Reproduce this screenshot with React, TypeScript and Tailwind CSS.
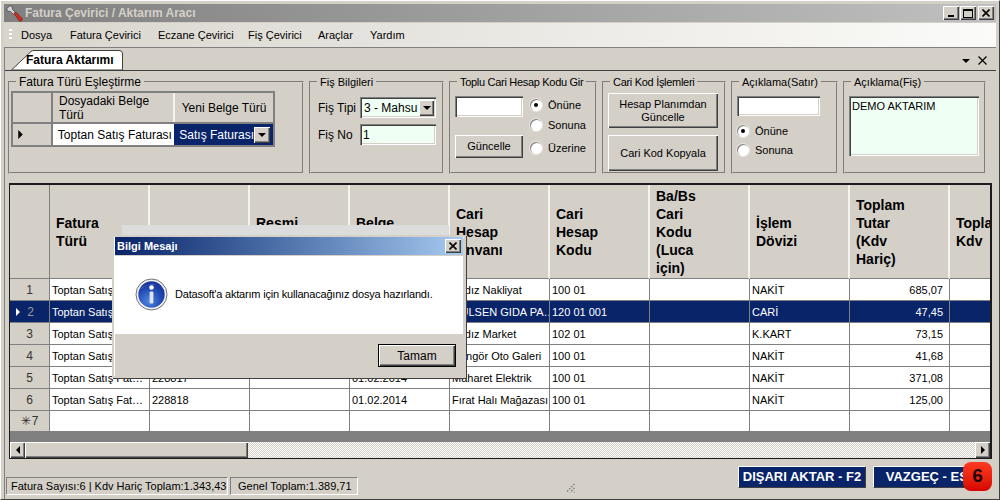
import type { ReactNode } from 'react';

const MENUS = ['Dosya', 'Fatura Çevirici', 'Eczane Çevirici', 'Fiş Çevirici', 'Araçlar', 'Yardım'];
const MENU_WIDTHS = ['w-[49px]', 'w-[88px]', 'w-[90px]', 'w-[70px]', 'w-[52px]', 'w-[40px]'];

const COLS = [
  'Fatura Türü',
  '',
  'Resmi Belge',
  'Belge Tarihi',
  'Cari Hesap Ünvanı',
  'Cari Hesap Kodu',
  'Ba/Bs Cari Kodu (Luca için)',
  'İşlem Dövizi',
  'Toplam Tutar (Kdv Hariç)',
  'Toplam Kdv',
];

const ROWS = [
  ['Toptan Satış Fat…', '228813', '', '01.02.2014', 'Yıldız Nakliyat', '100 01', '', 'NAKİT', '685,07', ''],
  ['Toptan Satış Fat…', '228814', '', '01.02.2014', 'GÜLSEN GIDA PA…', '120 01 001', '', 'CARİ', '47,45', ''],
  ['Toptan Satış Fat…', '228815', '', '01.02.2014', 'Yıldız Market', '102 01', '', 'K.KART', '73,15', ''],
  ['Toptan Satış Fat…', '228816', '', '01.02.2014', 'Dengör Oto Galeri', '100 01', '', 'NAKİT', '41,68', ''],
  ['Toptan Satış Fat…', '228817', '', '01.02.2014', 'Maharet Elektrik', '100 01', '', 'NAKİT', '371,08', ''],
  ['Toptan Satış Fat…', '228818', '', '01.02.2014', 'Fırat Halı Mağazası', '100 01', '', 'NAKİT', '125,00', ''],
  ['', '', '', '', '', '', '', '', '', ''],
];

const SUNKEN = 'shadow-[inset_1px_1px_0_#808080,inset_2px_2px_0_#404040,inset_-1px_-1px_0_#ffffff,inset_-2px_-2px_0_#d4d0c8]';
const RAISED = 'shadow-[inset_1px_1px_0_#ffffff,inset_-1px_-1px_0_#404040,inset_-2px_-2px_0_#808080]';

function Group({ title, className, legend = 'text-[11px]', children }: { title: string; className: string; legend?: string; children: ReactNode }) {
  return (
    <fieldset className={`h-[99px] shrink-0 border-2 border-[#d4d0c8] [border-style:groove] ${className}`}>
      <legend className={`ml-[6px] h-[14px] px-[3px] leading-[14px] whitespace-nowrap ${legend}`}>{title}</legend>
      {children}
    </fieldset>
  );
}

function Radio({ label, on, className = '' }: { label: string; on?: boolean; className?: string }) {
  return (
    <div className={`flex items-center gap-[6px] text-[11px] leading-[14px] ${className}`}>
      <span className="flex h-[12px] w-[12px] items-center justify-center rounded-full bg-white shadow-[inset_1px_1px_0_#808080,0_0_0_1px_#e8e6e0]">
        {on && <span className="h-[4px] w-[4px] rounded-full bg-black" />}
      </span>
      {label}
    </div>
  );
}

function Arrow({ dir = 'down', className = '' }: { dir?: 'down' | 'left' | 'right'; className?: string }) {
  const pts = dir === 'down' ? '0,0 8,0 4,4' : dir === 'left' ? '4,0 4,8 0,4' : '0,0 0,8 4,4';
  return (
    <svg viewBox={dir === 'down' ? '0 0 8 4' : '0 0 4 8'} className={`${dir === 'down' ? 'h-[4px] w-[8px]' : 'h-[8px] w-[4px]'} ${className}`}>
      <polygon points={pts} fill="currentColor" />
    </svg>
  );
}

function WinBtn({ children }: { children: ReactNode }) {
  return (
    <span className={`flex h-[14px] w-[16px] items-center justify-center bg-[#d4d0c8] ${RAISED}`}>{children}</span>
  );
}

function CloseGlyph({ size = 8 }: { size?: number }) {
  return (
    <svg width={size} height={size} viewBox="0 0 8 8">
      <path d="M0.5 0.5L7.5 7.5M7.5 0.5L0.5 7.5" stroke="#000" strokeWidth="1.6" />
    </svg>
  );
}

function WrenchIcon() {
  return (
    <svg width="17" height="17" viewBox="0 0 17 17" className="shrink-0">
      <path d="M1 3.5L3.5 1L6 1L6.5 4.5L9.5 7.5L7.5 9.5L4.5 6.5L1 6Z" fill="#d4d4d4" stroke="#4a4a4a" strokeWidth="0.8" />
      <path d="M8 8.5L9.5 7L16 13.5C16.5 15.5 15 16.5 13.5 16Z" fill="#e0281c" stroke="#6e140e" strokeWidth="0.7" />
    </svg>
  );
}

function InfoIcon() {
  return (
    <svg width="33" height="33" viewBox="0 0 33 33">
      <defs>
        <radialGradient id="infoFill" cx="0.4" cy="0.75" r="0.85">
          <stop offset="0" stopColor="#4f86e0" />
          <stop offset="0.6" stopColor="#1f45b0" />
          <stop offset="1" stopColor="#142f8c" />
        </radialGradient>
      </defs>
      <circle cx="16.5" cy="16.5" r="15.5" fill="#f2f2f2" stroke="#6f6f78" />
      <circle cx="16.5" cy="16.5" r="13.2" fill="url(#infoFill)" />
      <path d="M4 14C8 7 20 3 29 11C24 5 9 4 4 14Z" fill="#a9c2f0" opacity="0.7" />
      <circle cx="16.5" cy="9.5" r="2.3" fill="#fff" />
      <rect x="14.6" y="13.5" width="3.8" height="12" rx="1" fill="#dfe3ea" />
    </svg>
  );
}

function DataGrid() {
  return (
    <div className="mx-[4px] mt-[9px] flex h-[276px] flex-col overflow-hidden border-t-2 border-r-2 border-b-[1px] border-l-[1px] border-[#1c1c1c] bg-[#808080]">
      <div className="flex h-[94px] shrink-0 bg-[#d4d0c8]">
        <div className="h-full w-[40px] shrink-0 border-r border-b border-[#808080]" />
        {COLS.map((c, i) => (
          <div
            key={i}
            className="flex h-full w-[100px] shrink-0 items-center border-r-2 border-b border-r-[#f4f3ef] border-b-[#808080] pr-[2px] pl-[6px] text-[14px] leading-[18px] font-bold"
          >
            <span className="w-min">{c}</span>
          </div>
        ))}
      </div>
      {ROWS.map((row, r) => {
        const sel = r === 1;
        return (
          <div key={r} className={`flex shrink-0 ${r === 6 ? 'h-[21px]' : 'h-[22px]'} ${sel ? 'bg-[#0a246a] text-white' : 'bg-white text-black'}`}>
            <div className={`flex w-[40px] shrink-0 items-center justify-center border-r border-b border-[#808080] text-[12px] ${sel ? 'bg-[#0a246a] text-[#9a9a9a]' : 'bg-[#d4d0c8] text-[#333]'}`}>
              {sel && <Arrow dir="right" className="mr-[7px] ml-[-9px] text-white" />}
              {r === 6 && <span className="mr-[1px] text-[12px] leading-none">✳</span>}
              {r + 1}
            </div>
            {row.map((cell, c) => (
              <div
                key={c}
                className={`flex w-[100px] shrink-0 items-center overflow-hidden border-r border-b border-[#808080] px-[2px] pt-[1px] text-[11px] whitespace-nowrap ${c === 8 ? 'justify-end pr-[6px]' : ''}`}
              >
                {cell}
              </div>
            ))}
          </div>
        );
      })}
      <div className="min-h-0 flex-1" />
      <div className="flex h-[16px] shrink-0 bg-[repeating-conic-gradient(#d4d0c8_0_25%,#ffffff_0_50%)] bg-[length:2px_2px]">
        <span className={`flex h-full w-[15px] items-center justify-center bg-[#d4d0c8] ${RAISED}`}>
          <Arrow dir="left" />
        </span>
        <span className={`h-full w-[223px] bg-[#d4d0c8] ${RAISED}`} />
        <span className={`ml-auto flex h-full w-[15px] items-center justify-center bg-[#d4d0c8] ${RAISED}`}>
          <Arrow dir="right" />
        </span>
      </div>
    </div>
  );
}

function MessageBox() {
  return (
    <>
      <div className="absolute top-[224px] left-[121px] h-[10px] w-[327px] bg-[#dcdcdc]" />
      <div className="absolute top-[234px] left-[111px] flex h-[143px] w-[354px] flex-col border-2 border-[#d4d0c8] bg-[#d4d0c8] shadow-[1px_1px_0_#404040,inset_1px_1px_0_#ffffff]">
        <div className="mx-[1px] flex h-[18px] shrink-0 items-center justify-between bg-gradient-to-r from-[#0a246a] to-[#a6caf0] pr-[2px] pl-[2px] text-[11px] font-bold text-white">
          Bilgi Mesajı
          <span className={`flex h-[14px] w-[16px] items-center justify-center bg-[#d4d0c8] ${RAISED}`}>
            <CloseGlyph />
          </span>
        </div>
        <div className="mx-[1px] mt-[1px] flex h-[78px] shrink-0 items-center bg-white pb-[2px] pl-[20px]">
          <InfoIcon />
          <span className="ml-[7px] text-[11px] tracking-[-0.2px]">Datasoft'a aktarım için kullanacağınız dosya hazırlandı.</span>
        </div>
        <div className="flex flex-1 justify-end pt-[10px] pr-[8px]">
          <button className={`h-[23px] w-[78px] border border-black bg-[#d4d0c8] text-[12px] ${RAISED}`}>Tamam</button>
        </div>
      </div>
    </>
  );
}

export default function App() {
  return (
    <div className="relative h-[500px] w-[1000px] overflow-hidden border-[1px] border-t-[#ffffff] border-r-[#404040] border-b-[#404040] border-l-[#ffffff] bg-[#d4d0c8] px-[3px] pt-[3px] font-['Liberation_Sans',sans-serif] text-[11px] text-black">
      <div className="flex h-[18px] items-center bg-gradient-to-r from-[#808080] to-[#c0c0c0] pr-[2px] pl-[2px]">
        <WrenchIcon />
        <span className="ml-[2px] text-[12px] font-bold text-[#d4d0c8]">Fatura Çevirici / Aktarım Aracı</span>
        <div className="ml-auto flex gap-[1px]">
          <WinBtn><span className="mt-[6px] h-[2px] w-[6px] bg-black" /></WinBtn>
          <WinBtn><span className="h-[9px] w-[10px] border border-t-2 border-black" /></WinBtn>
          <span className="ml-[1px]"><WinBtn><CloseGlyph /></WinBtn></span>
        </div>
      </div>

      <div className="mt-[1px] flex h-[24px] items-center bg-gradient-to-r from-[#d8d5cd] to-[#fbfbf9] pl-[5px]">
        <span className="mr-[9px] h-[12px] w-[3px] bg-[repeating-linear-gradient(#ffffff_0_2px,#d4d0c8_2px_4px)]" />
        {MENUS.map((m, i) => (
          <span key={m} className={`${MENU_WIDTHS[i]} shrink-0 whitespace-nowrap`}>{m}</span>
        ))}
      </div>

      <div className="relative h-[452px] border-t border-l border-[#808080]">
        <div className="flex h-[23px] items-end border-b border-[#404040] pl-[6px]">
          <div className="relative flex h-[20px] w-[112px] items-center pl-[15px] text-[12px] font-bold">
            <svg viewBox="0 0 112 20" className="absolute inset-0 h-[20px] w-[112px]">
              <path d="M0.5 20L20 1.5Q21 0.5 23 0.5H108Q111 0.5 111.5 3V20Z" fill="#fff" stroke="#404040" />
            </svg>
            <span className="relative">Fatura Aktarımı</span>
          </div>
          <div className="mb-[5px] ml-auto flex items-center gap-[8px] pr-[9px]">
            <Arrow />
            <svg width="9" height="9" viewBox="0 0 9 9">
              <path d="M0.5 0.5L8.5 8.5M8.5 0.5L0.5 8.5" stroke="#000" strokeWidth="1.2" />
            </svg>
          </div>
        </div>

        <div className="flex gap-[5px] pt-[4px] pl-[3px]">
          <Group title="Fatura Türü Eşleştirme" className="w-[296px]" legend="text-[12px]">
            <div className="mt-[2px] ml-[1px] w-[264px] border-2 border-[#808080] bg-[#d4d0c8] text-[12px] leading-[14px]">
              <div className="flex h-[31px] border-b-2 border-[#808080]">
                <span className="w-[40px] border-r-2 border-[#808080]" />
                <span className="w-[122px] border-r-2 border-[#f4f3ef] px-[6px] pt-[1px]">Dosyadaki Belge Türü</span>
                <span className="flex flex-1 items-center justify-center whitespace-nowrap">Yeni Belge Türü</span>
              </div>
              <div className="flex h-[21px]">
                <span className="flex w-[40px] items-center border-r-2 border-[#808080] pl-[5px]"><Arrow dir="right" className="h-[9px] w-[5px]" /></span>
                <span className="flex w-[122px] items-center whitespace-nowrap bg-white pl-[5px]">Toptan Satış Faturası</span>
                <span className="flex flex-1 items-center justify-between whitespace-nowrap bg-[#0a246a] pr-[3px] pl-[5px] text-white">
                  Satış Faturası
                  <span className={`flex h-[16px] w-[16px] items-center justify-center bg-[#d4d0c8] text-black ${RAISED}`}><Arrow /></span>
                </span>
              </div>
            </div>
          </Group>

          <Group title="Fiş Bilgileri" className="w-[135px]">
            <div className="flex flex-col gap-[6px] pt-[8px] pl-[7px] text-[12px]">
              <div className="flex items-center">
                <span className="w-[42px]">Fiş Tipi</span>
                <span className={`flex h-[21px] w-[76px] items-center overflow-hidden bg-[#f0fff4] pr-[2px] pl-[4px] whitespace-nowrap ${SUNKEN}`}>
                  <span className="min-w-0 flex-1 overflow-hidden">3 - Mahsu</span>
                  <span className={`flex h-[16px] w-[15px] shrink-0 items-center justify-center bg-[#d4d0c8] ${RAISED}`}><Arrow /></span>
                </span>
              </div>
              <div className="flex items-center">
                <span className="w-[42px]">Fiş No</span>
                <span className={`flex h-[21px] w-[76px] items-center bg-[#f0fff4] pl-[3px] ${SUNKEN}`}>1</span>
              </div>
            </div>
          </Group>

          <Group title="Toplu Cari Hesap Kodu Gir" className="w-[148px]" legend="text-[11px] tracking-[-0.3px]">
            <div className="flex pt-[7px] pl-[4px]">
              <div className="flex w-[75px] shrink-0 flex-col">
                <span className={`h-[21px] w-[68px] bg-white ${SUNKEN}`} />
                <button className={`mt-[18px] h-[23px] w-[68px] bg-[#d4d0c8] text-[11px] ${RAISED}`}>Güncelle</button>
              </div>
              <div className="flex flex-col">
                <Radio label="Önüne" on className="mt-[2px]" />
                <Radio label="Sonuna" className="mt-[6px]" />
                <Radio label="Üzerine" className="mt-[9px]" />
              </div>
            </div>
          </Group>

          <Group title="Cari Kod İşlemleri" className="w-[124px]" legend="text-[11px] tracking-[-0.3px]">
            <div className="flex flex-col gap-[7px] pt-[4px] pl-[4px]">
              <button className={`h-[35px] w-[110px] bg-[#d4d0c8] px-[6px] text-[11px] leading-[13px] ${RAISED}`}>Hesap Planımdan Güncelle</button>
              <button className={`h-[36px] w-[110px] bg-[#d4d0c8] text-[11px] ${RAISED}`}>Cari Kod Kopyala</button>
            </div>
          </Group>

          <Group title="Açıklama(Satır)" className="w-[107px]">
            <div className="pt-[7px] pl-[4px]">
              <span className={`block h-[20px] w-[83px] bg-white ${SUNKEN}`} />
              <Radio label="Önüne" on className="mt-[8px]" />
              <Radio label="Sonuna" className="mt-[5px]" />
            </div>
          </Group>

          <Group title="Açıklama(Fiş)" className="w-[143px]">
            <div className="pt-[7px] pl-[4px]">
              <div className={`h-[60px] w-[130px] bg-[#f0fff4] px-[3px] pt-[2px] text-[11px] ${SUNKEN}`}>DEMO AKTARIM</div>
            </div>
          </Group>
        </div>

        <DataGrid />

        <div className="relative flex h-[36px] items-start">
          <div className="mt-[18px] flex h-[18px] w-[571px] shrink-0 gap-[2px] pl-[1px] text-[11px]">
            <span className="flex w-[222px] items-center border border-t-[#808080] border-r-[#ffffff] border-b-[#ffffff] border-l-[#808080] px-[4px] whitespace-nowrap">Fatura Sayısı:6 | Kdv Hariç Toplam:1.343,43</span>
            <span className="flex w-[128px] items-center border border-t-[#808080] border-r-[#ffffff] border-b-[#ffffff] border-l-[#808080] px-[7px] whitespace-nowrap">Genel Toplam:1.389,71</span>
            <svg width="12" height="12" viewBox="0 0 12 12" className="mt-[5px] ml-auto">
              <path d="M10.5 2L2 10.5M10.5 6L6 10.5M10.5 10L10 10.5" stroke="#808080" strokeWidth="1.5" strokeDasharray="1.5 1.5" />
            </svg>
          </div>
          <button className="mt-[7px] ml-[162px] h-[22px] w-[128px] shrink-0 border border-t-white border-r-[#404040] border-b-[#404040] border-l-white bg-[#0a246a] text-[13px] font-bold text-white">DIŞARI AKTAR - F2</button>
          <button className="mt-[7px] ml-[7px] h-[22px] w-[117px] shrink-0 border border-t-white border-r-[#404040] border-b-[#404040] border-l-white bg-[#0a246a] text-[13px] font-bold text-white">VAZGEÇ - ESC</button>
          <span className="absolute top-[3px] left-[958px] flex h-[29px] w-[29px] items-center justify-center rounded-[8px] bg-gradient-to-b from-[#ff3a20] to-[#d60000] text-[19px] font-bold text-[#200000]">6</span>
        </div>
      </div>

      <MessageBox />
    </div>
  );
}
